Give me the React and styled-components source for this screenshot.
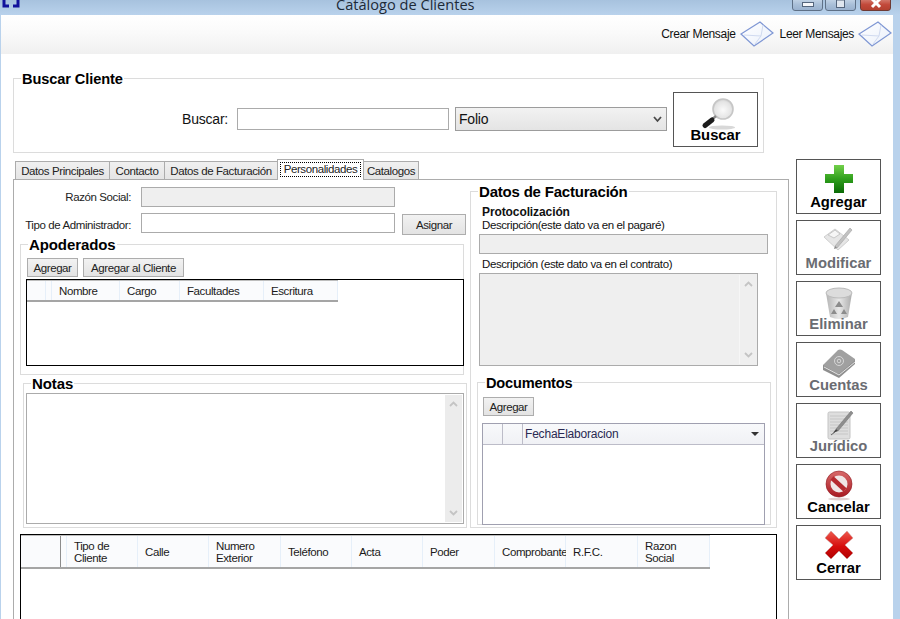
import React from 'react';
import styled, { createGlobalStyle } from 'styled-components';

const UI_FONT = '"Liberation Sans", Arial, sans-serif';

const apoderadosCols = [
  { label: '', w: 19 },
  { label: '', w: 6 },
  { label: 'Nombre', w: 68 },
  { label: 'Cargo', w: 60 },
  { label: 'Facultades', w: 84 },
  { label: 'Escritura', w: 74 }
];

const clienteCols = [
  { label: '', w: 40, dark: true },
  { label: '', w: 6 },
  { label: ['Tipo de', 'Cliente'], w: 71 },
  { label: 'Calle', w: 71 },
  { label: ['Numero', 'Exterior'], w: 72 },
  { label: 'Teléfono', w: 71 },
  { label: 'Acta', w: 71 },
  { label: 'Poder', w: 72 },
  { label: 'Comprobante', w: 71 },
  { label: 'R.F.C.', w: 72 },
  { label: ['Razon', 'Social'], w: 72 }
];

const GlobalStyle = createGlobalStyle`
  html, body {
    margin: 0;
    padding: 0;
    background: #fff;
  }
  body {
    font-family: ${UI_FONT};
    overflow: hidden;
  }
`;

const Frame = styled.div`
  position: relative;
  width: 900px;
  height: 619px;
  overflow: hidden;
  background: #fff;
  color: #000;
  font-size: 11.5px;
  letter-spacing: -0.4px;
`;

const TitleBar = styled.div`
  position: absolute;
  left: 0;
  top: 0;
  width: 900px;
  height: 15px;
  background: linear-gradient(#a7c2de, #b9d2ec);
`;

const Title = styled.div`
  position: absolute;
  left: 336px;
  top: -6px;
  font-family: "Open Sans", sans-serif;
  font-size: 14.6px;
  line-height: 20px;
  letter-spacing: 0;
  color: #1d2a38;
  white-space: nowrap;
`;

const WinButton = styled.div`
  position: absolute;
  left: ${p => p.$x}px;
  top: -3px;
  width: ${p => p.$w}px;
  height: 14px;
  box-sizing: border-box;
  border: 1px solid ${p => (p.$close ? '#6e3a34' : '#5f7187')};
  border-radius: 0 0 3px 3px;
  background: ${p => (p.$close
    ? 'linear-gradient(#d8897c, #c2493a 55%, #b3402f)'
    : 'linear-gradient(#c9d9ea, #a9bfd8 55%, #9ab2cf)')};
  display: flex;
  align-items: center;
  justify-content: center;
`;

const RightEdge = styled.div`
  position: absolute;
  left: 893px;
  top: 15px;
  width: 7px;
  height: 604px;
  background: #b9d2ec;
`;

const LeftEdge = styled.div`
  position: absolute;
  left: 0;
  top: 15px;
  width: 1px;
  height: 604px;
  background: #b9d2ec;
`;

const Toolbar = styled.div`
  position: absolute;
  left: 1px;
  top: 15px;
  width: 892px;
  height: 39px;
  background: linear-gradient(#fff, #fafafa 45%, #f0f0f0);
  display: flex;
  align-items: center;
  justify-content: flex-end;
  padding-right: 1px;
  box-sizing: border-box;
`;

const ToolLink = styled.div`
  display: flex;
  align-items: center;
  margin-left: 6px;
  font-size: 12px;
  letter-spacing: -0.33px;
  color: #111;
  white-space: nowrap;
  gap: 4px;
  position: relative;
  top: -1px;
`;

const Group = styled.div`
  position: absolute;
  left: ${p => p.$x}px;
  top: ${p => p.$y}px;
  width: ${p => p.$w}px;
  height: ${p => p.$h}px;
  box-sizing: border-box;
  border: 1px solid #dcdcdc;
`;

const Legend = styled.div`
  position: absolute;
  left: ${p => p.$x}px;
  top: -8px;
  padding: 0 1px;
  background: #fff;
  font-size: ${p => p.$size || 14.6}px;
  line-height: 16px;
  font-weight: bold;
  letter-spacing: ${p => p.$spacing ?? -0.1}px;
  white-space: nowrap;
`;

const SearchLabel = styled.label`
  position: absolute;
  left: 182px;
  top: 111px;
  font-size: 14px;
  line-height: 16px;
  letter-spacing: -0.2px;
  color: #111;
`;

const FormLabel = styled.label`
  position: absolute;
  right: ${p => 900 - p.$right}px;
  top: ${p => p.$y}px;
  line-height: 14px;
  color: #222;
  white-space: nowrap;
`;

const PlainLabel = styled.div`
  position: absolute;
  left: 482px;
  top: ${p => p.$y}px;
  font-size: ${p => (p.$bold ? 12 : 11.5)}px;
  line-height: 14px;
  letter-spacing: ${p => (p.$bold ? -0.1 : -0.4)}px;
  font-weight: ${p => (p.$bold ? 'bold' : 'normal')};
  color: #111;
  white-space: nowrap;
`;

const Field = styled.div`
  position: absolute;
  left: ${p => p.$x}px;
  top: ${p => p.$y}px;
  width: ${p => p.$w}px;
  height: ${p => p.$h}px;
  box-sizing: border-box;
  border: 1px solid #ababab;
  background: ${p => (p.$off ? '#efefef' : '#fff')};
`;

const ComboBox = styled.div`
  position: absolute;
  left: 455px;
  top: 107px;
  width: 212px;
  height: 24px;
  box-sizing: border-box;
  border: 1px solid #9c9c9c;
  background: linear-gradient(#f2f2f2, #e4e4e4);
  display: flex;
  align-items: center;
  justify-content: space-between;
  padding: 0 4px 0 3px;
  font-size: 14px;
  letter-spacing: -0.2px;
  color: #111;
`;

const BigButton = styled.div`
  position: absolute;
  left: ${p => p.$x}px;
  top: ${p => p.$y}px;
  width: 85px;
  height: 55px;
  box-sizing: border-box;
  border: 1px solid #555;
  background: #fff;
  text-align: center;
  font-size: 14.8px;
  line-height: 16px;
  letter-spacing: 0;
  font-weight: bold;
  color: ${p => (p.$off ? '#6a6c72' : '#000')};
`;

const BigIcon = styled.div`
  position: absolute;
  left: 0;
  right: 0;
  top: 4px;
  height: 32px;
  display: flex;
  justify-content: center;
`;

const BigCaption = styled.div`
  position: absolute;
  left: 0;
  right: 0;
  top: 34px;
`;

const TabStrip = styled.div`
  position: absolute;
  left: 15px;
  top: 159px;
  display: flex;
  align-items: flex-end;
  height: 21px;
`;

const Tab = styled.div`
  box-sizing: border-box;
  width: ${p => p.$w}px;
  height: ${p => (p.$active ? 21 : 19)}px;
  border: 1px solid #acacac;
  border-bottom: ${p => (p.$active ? 'none' : '1px solid #acacac')};
  margin-left: ${p => (p.$first ? 0 : -1)}px;
  background: ${p => (p.$active ? '#fff' : 'linear-gradient(#f0f0f0, #e5e5e5)')};
  line-height: 18px;
  color: #222;
  text-align: center;
  white-space: nowrap;
  position: relative;
  z-index: ${p => (p.$active ? 2 : 1)};
`;

const TabFocus = styled.span`
  display: block;
  margin: 2px 2px 0;
  height: 15px;
  line-height: 13px;
  border: 1px dotted #000;
  box-sizing: border-box;
`;

const TabPanel = styled.div`
  position: absolute;
  left: 13px;
  top: 179px;
  width: 776px;
  height: 460px;
  box-sizing: border-box;
  border: 1px solid #acacac;
  background: #fff;
`;

const SmallButton = styled.div`
  position: absolute;
  left: ${p => p.$x}px;
  top: ${p => p.$y}px;
  width: ${p => p.$w}px;
  height: ${p => p.$h || 19}px;
  box-sizing: border-box;
  border: 1px solid #adadad;
  background: linear-gradient(#f2f2f2, #e3e3e3);
  line-height: ${p => (p.$h || 19) - 1}px;
  text-align: center;
  color: #222;
  white-space: nowrap;
`;

const Grid = styled.div`
  position: absolute;
  left: ${p => p.$x}px;
  top: ${p => p.$y}px;
  width: ${p => p.$w}px;
  height: ${p => p.$h}px;
  box-sizing: border-box;
  border: ${p => (p.$light ? '1px solid #a0a0b0' : '1px solid #000')};
  background: #fff;
`;

const HeaderRow = styled.div`
  display: flex;
  height: ${p => p.$h}px;
  width: max-content;
  box-sizing: border-box;
  border-top: 1px solid #bdbdbd;
  border-bottom: 2px solid #a5a5a5;
`;

const HeaderCell = styled.div`
  box-sizing: border-box;
  flex: none;
  width: ${p => p.$w}px;
  padding-left: ${p => (p.$empty ? 0 : 7)}px;
  background: #fafbfd;
  border-right: ${p => (p.$dark ? '1px solid #8c8c8c' : '1px solid #e6eff9')};
  line-height: 12px;
  color: #1a1a1a;
  display: flex;
  flex-direction: column;
  justify-content: center;
  white-space: nowrap;
`;

const DocHeader = styled.div`
  display: flex;
  height: 20px;
  border-bottom: 1px solid #bcbcc8;
  background: linear-gradient(#f8f9fb, #f0f1f5);
`;

const DocCell = styled.div`
  box-sizing: border-box;
  width: ${p => p.$w}px;
  flex: ${p => (p.$w ? 'none' : 1)};
  border-right: ${p => (p.$w ? '1px solid #bcbcc8' : 'none')};
  padding: 0 5px 1px 2px;
  font-size: 12px;
  letter-spacing: -0.2px;
  line-height: 18px;
  color: #2a2a52;
  display: flex;
  justify-content: space-between;
  align-items: center;
`;

const SortCaret = styled.span`
  width: 0;
  height: 0;
  border-left: 4px solid transparent;
  border-right: 4px solid transparent;
  border-top: 4px solid #333;
`;

const ScrollTrack = styled.div`
  position: absolute;
  right: 1px;
  top: 1px;
  bottom: 1px;
  width: 17px;
  background: ${p => (p.$off ? '#efefef' : '#ececec')};
  border-left: ${p => (p.$off ? '1px solid #f6f6f6' : 'none')};
  display: flex;
  flex-direction: column;
  justify-content: space-between;
  align-items: center;
  padding: 6px 0;
  box-sizing: border-box;
`;

const Chevron = ({ up }) => (
  <svg width="9" height="6" viewBox="0 0 9 6">
    <path d={up ? 'M1 5 L4.5 1.5 L8 5' : 'M1 1 L4.5 4.5 L8 1'} fill="none" stroke="#c4c4c4" strokeWidth="1.8" />
  </svg>
);

const Envelope = () => (
  <svg width="34" height="26" viewBox="0 0 34 26">
    <defs>
      <linearGradient id="envFill" x1="0" y1="0" x2="1" y2="1">
        <stop offset="0" stopColor="#ffffff" />
        <stop offset="1" stopColor="#eaf0fb" />
      </linearGradient>
    </defs>
    <path d="M1 13 L20 1 L33 12 L14 25 Z" fill="url(#envFill)" stroke="#7f97d4" strokeWidth="1.2" />
    <path d="M4 14 L21 15 L23 4 M21 15 L15 23" fill="none" stroke="#d0daf0" strokeWidth="1" />
  </svg>
);

const MagnifierIcon = () => (
  <svg width="44" height="36" viewBox="0 0 44 36">
    <defs>
      <radialGradient id="lens" cx="0.5" cy="0.55" r="0.6">
        <stop offset="0" stopColor="#fafafa" />
        <stop offset="0.7" stopColor="#e4e4e4" />
        <stop offset="1" stopColor="#c4c4c4" />
      </radialGradient>
    </defs>
    <ellipse cx="28" cy="30.5" rx="13" ry="2" fill="#d8d8d8" />
    <circle cx="29" cy="12" r="10" fill="url(#lens)" stroke="#c6c6c6" strokeWidth="1.6" />
    <path d="M22 19 L18 22.5" stroke="#8a8a8a" strokeWidth="2.4" />
    <path d="M18 23 L11 28.5" stroke="#1c1c1c" strokeWidth="5" strokeLinecap="round" />
  </svg>
);

const PlusIcon = () => (
  <svg width="32" height="30" viewBox="0 0 32 30">
    <defs>
      <linearGradient id="plusFill" x1="0" y1="0" x2="0" y2="1">
        <stop offset="0" stopColor="#72d04a" />
        <stop offset="0.5" stopColor="#2f9f1c" />
        <stop offset="1" stopColor="#0a6a05" />
      </linearGradient>
    </defs>
    <path d="M11 1 H21 V10 H30 V19 H21 V29 H11 V19 H2 V10 H11 Z" fill="url(#plusFill)" />
  </svg>
);

const EditIcon = () => (
  <svg width="32" height="30" viewBox="0 0 32 30">
    <path d="M1 12 L12 4 L26 15 L15 25 Z" fill="#e6e6e6" stroke="#cfcfcf" />
    <path d="M5 10 L12 5 L17 9 L11 13 Z" fill="#f6f6f6" stroke="#c8c8c8" />
    <path d="M12 21 L27 3 L29 5 L14 23 Z" fill="#c2c2c2" stroke="#a2a2a2" strokeWidth="0.6" />
    <path d="M12 21 L11 24 L14 23 Z" fill="#888" />
  </svg>
);

const TrashIcon = () => (
  <svg width="30" height="34" viewBox="0 0 30 34">
    <defs>
      <linearGradient id="binFill" x1="0" y1="0" x2="1" y2="0">
        <stop offset="0" stopColor="#b4b4b4" />
        <stop offset="0.5" stopColor="#e8e8e8" />
        <stop offset="1" stopColor="#acacac" />
      </linearGradient>
    </defs>
    <path d="M2 7 L6 31 Q15 35 24 31 L28 7 Z" fill="url(#binFill)" />
    <ellipse cx="15" cy="7" rx="13" ry="5" fill="#dcdcdc" stroke="#bbb" />
    <path d="M15 15 L19 21 H11 Z M10 23 L13 28 H7 Z M20 23 L23 28 H17 Z" fill="#8c8c8c" />
  </svg>
);

const BookIcon = () => (
  <svg width="34" height="32" viewBox="0 0 34 32">
    <path d="M1 18 L1 23 L17 31 L33 17 L33 12 Z" fill="#8f8f8f" />
    <path d="M1 18 L16 3 Q18 2 20 3 L33 12 Q33 14 31 15 L18 26 Q16 27 14 26 Z" fill="#a0a0a0" />
    <circle cx="17" cy="14" r="4.5" fill="none" stroke="#d6d6d6" strokeWidth="1" />
    <circle cx="17" cy="14" r="1.8" fill="none" stroke="#d6d6d6" strokeWidth="1" />
    <path d="M2 20 L17 28 L33 15" fill="none" stroke="#e2e2e2" strokeWidth="1" />
  </svg>
);

const NotepadIcon = () => (
  <svg width="32" height="32" viewBox="0 0 32 32">
    <rect x="5" y="4" width="22" height="27" rx="1.5" fill="#dedede" stroke="#c4c4c4" />
    <path d="M7 8 H25 M7 11 H25 M7 14 H25 M7 17 H25 M7 20 H25 M7 23 H25 M7 26 H25" stroke="#c6c6c6" strokeWidth="1" />
    <path d="M13 21 L28 3 L30 5 L15 23 Z" fill="#8e8e8e" stroke="#6e6e6e" strokeWidth="0.5" />
    <path d="M13 21 L10 25 L15 23 Z" fill="#444" />
    <path d="M8 27 L12 24" stroke="#666" strokeWidth="1" />
  </svg>
);

const NoSignIcon = () => (
  <svg width="32" height="32" viewBox="0 0 32 32">
    <defs>
      <linearGradient id="noFill" x1="0" y1="0" x2="0" y2="1">
        <stop offset="0" stopColor="#d86a6a" />
        <stop offset="1" stopColor="#a81a22" />
      </linearGradient>
    </defs>
    <ellipse cx="16" cy="30" rx="11" ry="1.5" fill="#e0d0d0" />
    <circle cx="16" cy="15" r="13" fill="url(#noFill)" stroke="#8e1a20" strokeWidth="0.6" />
    <circle cx="16" cy="15" r="8.5" fill="#f0e6e6" />
    <path d="M9 9 L22 21" stroke="#b52a30" strokeWidth="4.5" />
  </svg>
);

const CrossIcon = () => (
  <svg width="30" height="30" viewBox="0 0 30 30">
    <defs>
      <linearGradient id="xFill" x1="0" y1="0" x2="0" y2="1">
        <stop offset="0" stopColor="#ee5a4e" />
        <stop offset="0.55" stopColor="#d60d0d" />
        <stop offset="1" stopColor="#b00000" />
      </linearGradient>
    </defs>
    <path d="M7 1 L15 9 L23 1 L29 8 L21 15 L29 23 L23 29 L15 21 L7 29 L1 23 L9 15 L1 8 Z" fill="url(#xFill)" stroke="#c9a0a0" strokeWidth="0.5" strokeLinejoin="round" />
  </svg>
);

const ComboCaret = () => (
  <svg width="9" height="7" viewBox="0 0 9 7">
    <path d="M1 1 L4.5 5 L8 1" fill="none" stroke="#4a4a4a" strokeWidth="1.8" />
  </svg>
);

const sideButtons = [
  { y: 159, caption: 'Agregar', icon: <PlusIcon /> },
  { y: 220, caption: 'Modificar', icon: <EditIcon />, off: true },
  { y: 281, caption: 'Eliminar', icon: <TrashIcon />, off: true },
  { y: 342, caption: 'Cuentas', icon: <BookIcon />, off: true },
  { y: 403, caption: 'Jurídico', icon: <NotepadIcon />, off: true },
  { y: 464, caption: 'Cancelar', icon: <NoSignIcon /> },
  { y: 525, caption: 'Cerrar', icon: <CrossIcon /> }
];

const tabs = [
  { label: 'Datos Principales', w: 95 },
  { label: 'Contacto', w: 56 },
  { label: 'Datos de Facturación', w: 114 },
  { label: 'Personalidades', w: 87, active: true },
  { label: 'Catalogos', w: 56 }
];

const renderCols = cols => cols.map((col, i) => (
  <HeaderCell key={i} $w={col.w} $dark={col.dark} $empty={!col.label}>
    {Array.isArray(col.label)
      ? col.label.map(line => <span key={line}>{line}</span>)
      : col.label}
  </HeaderCell>
));

const App = () => {
  return (
    <Frame>
      <GlobalStyle />

      <TitleBar>
        <svg width="20" height="8" viewBox="0 0 20 8" style={{ position: 'absolute', left: 2, top: 0 }}>
          <path d="M2 0 V6 H7 M16 0 V6 H11" fill="none" stroke="#12129c" strokeWidth="3" />
        </svg>
        <Title>Catálogo de Clientes</Title>
        <WinButton $x={792} $w={31}>
          <svg width="12" height="5" viewBox="0 0 12 5"><rect x="0.5" y="0.5" width="11" height="4" fill="#f4f6fa" stroke="#54657c" /></svg>
        </WinButton>
        <WinButton $x={825} $w={31}>
          <svg width="11" height="9" viewBox="0 0 11 9"><rect x="1.5" y="0" width="8" height="7.5" fill="#dfe6ef" stroke="#54657c" /></svg>
        </WinButton>
        <WinButton $x={860} $w={31} $close>
          <svg width="14" height="10" viewBox="0 0 14 10"><path d="M3 0 L11 8 M11 0 L3 8" stroke="#fff" strokeWidth="3" /></svg>
        </WinButton>
      </TitleBar>
      <LeftEdge />
      <RightEdge />

      <Toolbar>
        <ToolLink>Crear Mensaje <Envelope /></ToolLink>
        <ToolLink>Leer Mensajes <Envelope /></ToolLink>
      </Toolbar>

      <Group $x={13} $y={78} $w={751} $h={75}>
        <Legend $x={7}>Buscar Cliente</Legend>
      </Group>
      <SearchLabel>Buscar:</SearchLabel>
      <Field $x={237} $y={108} $w={212} $h={22} />
      <ComboBox>Folio <ComboCaret /></ComboBox>
      <BigButton $x={673} $y={92}>
        <BigIcon><MagnifierIcon /></BigIcon>
        <BigCaption>Buscar</BigCaption>
      </BigButton>

      {sideButtons.map(btn => (
        <BigButton key={btn.caption} $x={796} $y={btn.y} $off={btn.off}>
          <BigIcon>{btn.icon}</BigIcon>
          <BigCaption>{btn.caption}</BigCaption>
        </BigButton>
      ))}

      <TabPanel />
      <TabStrip>
        {tabs.map((tab, i) => (
          <Tab key={tab.label} $w={tab.w} $active={tab.active} $first={i === 0}>
            {tab.active ? <TabFocus>{tab.label}</TabFocus> : tab.label}
          </Tab>
        ))}
      </TabStrip>

      <FormLabel $right={131} $y={190}>Razón Social:</FormLabel>
      <Field $x={141} $y={187} $w={254} $h={20} $off />
      <FormLabel $right={131} $y={218}>Tipo de Administrador:</FormLabel>
      <Field $x={141} $y={213} $w={254} $h={20} />
      <SmallButton $x={402} $y={214} $w={64} $h={21}>Asignar</SmallButton>

      <Group $x={20} $y={244} $w={444} $h={131}>
        <Legend $x={7} $size={15}>Apoderados</Legend>
      </Group>
      <SmallButton $x={27} $y={258} $w={51}>Agregar</SmallButton>
      <SmallButton $x={83} $y={258} $w={101}>Agregar al Cliente</SmallButton>
      <Grid $x={26} $y={279} $w={438} $h={87}>
        <HeaderRow $h={22}>{renderCols(apoderadosCols)}</HeaderRow>
      </Grid>

      <Group $x={23} $y={383} $w={444} $h={145}>
        <Legend $x={7} $size={15}>Notas</Legend>
      </Group>
      <Field $x={26} $y={393} $w={438} $h={131}>
        <ScrollTrack>
          <Chevron up />
          <Chevron />
        </ScrollTrack>
      </Field>

      <Group $x={470} $y={191} $w={307} $h={337}>
        <Legend $x={7} $size={15} $spacing={-0.2}>Datos de Facturación</Legend>
      </Group>
      <PlainLabel $y={205} $bold>Protocolización</PlainLabel>
      <PlainLabel $y={218}>Descripción(este dato va en el pagaré)</PlainLabel>
      <Field $x={479} $y={234} $w={289} $h={20} $off />
      <PlainLabel $y={257}>Descripción (este dato va en el contrato)</PlainLabel>
      <Field $x={479} $y={273} $w={279} $h={93} $off>
        <ScrollTrack $off>
          <Chevron up />
          <Chevron />
        </ScrollTrack>
      </Field>

      <Group $x={477} $y={382} $w={294} $h={143}>
        <Legend $x={7} $size={14.6} $spacing={-0.2}>Documentos</Legend>
      </Group>
      <SmallButton $x={483} $y={397} $w={51}>Agregar</SmallButton>
      <Grid $x={482} $y={423} $w={283} $h={102} $light>
        <DocHeader>
          <DocCell $w={20} />
          <DocCell $w={20} />
          <DocCell>FechaElaboracion <SortCaret /></DocCell>
        </DocHeader>
      </Grid>

      <Grid $x={20} $y={534} $w={757} $h={100}>
        <HeaderRow $h={34}>{renderCols(clienteCols)}</HeaderRow>
      </Grid>
    </Frame>
  );
};

export default App;
